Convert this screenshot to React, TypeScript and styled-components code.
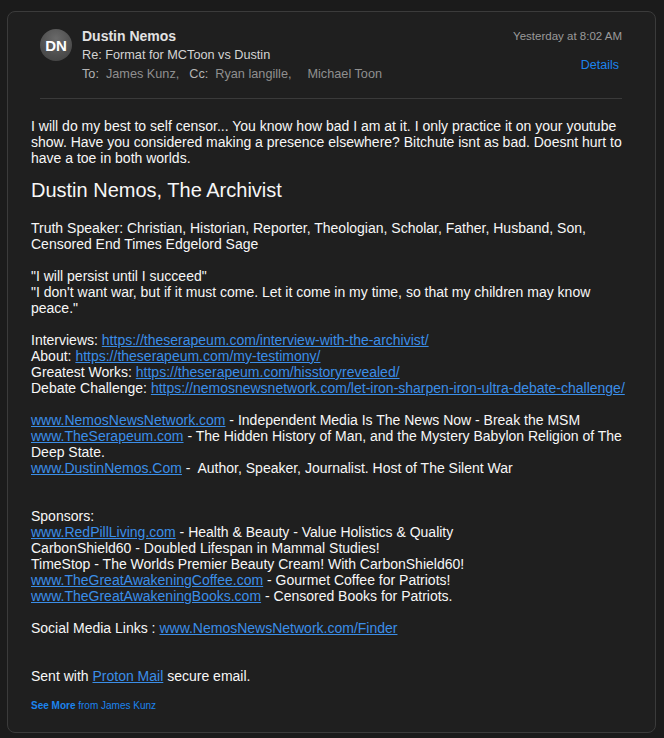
import React from "react";
import styled, { createGlobalStyle } from "styled-components";

const GlobalStyle = createGlobalStyle`
  html, body {
    margin: 0;
    padding: 0;
    background: #1b1b1b;
  }
  body {
    font-family: "Liberation Sans", Arial, Helvetica, sans-serif;
  }
`;

const Page = styled.div`
  padding: 11px 8px 6px 7px;
`;

const Card = styled.div`
  background: #1f1f1f;
  border: 1px solid #3b3b3b;
  border-radius: 8px;
  padding-bottom: 20px;
`;

const Header = styled.div`
  display: flex;
  align-items: flex-start;
  padding: 15px 33px 0 32px;
`;

const Avatar = styled.div`
  width: 32px;
  height: 32px;
  margin-top: 2px;
  border-radius: 50%;
  background: radial-gradient(circle at 50% 30%, #6a6a6a 0%, #4e4e4e 60%, #3f3f3f 100%);
  color: #ffffff;
  font-size: 15px;
  font-weight: bold;
  display: flex;
  align-items: center;
  justify-content: center;
  flex-shrink: 0;
`;

const Info = styled.div`
  flex: 1;
  margin-left: 10px;
  display: flex;
  flex-direction: column;
`;

const Name = styled.div`
  font-size: 14px;
  font-weight: bold;
  line-height: 19px;
  color: #e2e2e2;
`;

const Subject = styled.div`
  font-size: 12.7px;
  line-height: 19px;
  color: #d4d4d4;
`;

const Recipients = styled.div`
  display: flex;
  font-size: 12.7px;
  line-height: 19px;
`;

const Label = styled.span<{ $gap?: number }>`
  color: #b4b4b4;
  margin-left: ${(p) => p.$gap ?? 0}px;
  margin-right: 7px;
`;

const Person = styled.span<{ $gap?: number }>`
  color: #8f8f8f;
  margin-left: ${(p) => p.$gap ?? 0}px;
`;

const Side = styled.div`
  display: flex;
  flex-direction: column;
  align-items: flex-end;
`;

const DateText = styled.div`
  font-size: 11.5px;
  line-height: 19px;
  color: #9a9a9a;
`;

const DetailsLink = styled.a`
  margin-top: 10px;
  margin-right: 3px;
  font-size: 12.5px;
  line-height: 19px;
  color: #1c84ee;
  text-decoration: none;
`;

const Divider = styled.div`
  height: 1px;
  background: #3a3a3a;
  margin: 14px 33px 0 32px;
`;

const Body = styled.div`
  padding: 19px 24px 0 23px;
  font-size: 14px;
  line-height: 16px;
  color: #f7f7f7;
`;

const Heading = styled.div`
  font-size: 20px;
  line-height: 23px;
  margin: 13px 0 18px;
`;

const Blank = styled.div<{ $lines?: number }>`
  height: ${(p) => (p.$lines ?? 1) * 16}px;
`;

const Link = styled.a`
  color: #3b8ee8;
  text-decoration: underline;
`;

const Footer = styled.div`
  margin-top: 16px;
  font-size: 10px;
  line-height: 12px;
  color: #1c84ee;
`;

const Bold = styled.span`
  font-weight: bold;
`;

const App: React.FC = () => {
  return (
    <>
      <GlobalStyle />
      <Page>
        <Card>
          <Header>
            <Avatar>DN</Avatar>
            <Info>
              <Name>Dustin Nemos</Name>
              <Subject>Re: Format for MCToon vs Dustin</Subject>
              <Recipients>
                <Label>To:</Label>
                <Person>James Kunz,</Person>
                <Label $gap={10}>Cc:</Label>
                <Person>Ryan langille,</Person>
                <Person $gap={16}>Michael Toon</Person>
              </Recipients>
            </Info>
            <Side>
              <DateText>Yesterday at 8:02 AM</DateText>
              <DetailsLink>Details</DetailsLink>
            </Side>
          </Header>
          <Divider />
          <Body>
            <div>
              I will do my best to self censor... You know how bad I am at it. I only practice it on
              your youtube show. Have you considered making a presence elsewhere? Bitchute isnt as
              bad. Doesnt hurt to have a toe in both worlds.
            </div>
            <Heading>Dustin Nemos, The Archivist</Heading>
            <div>
              Truth Speaker: Christian, Historian, Reporter, Theologian, Scholar, Father, Husband,
              Son, Censored End Times Edgelord Sage
            </div>
            <Blank />
            <div>"I will persist until I succeed"</div>
            <div>
              "I don't want war, but if it must come. Let it come in my time, so that my children may
              know peace."
            </div>
            <Blank />
            <div>
              Interviews: <Link>https://theserapeum.com/interview-with-the-archivist/</Link>
            </div>
            <div>
              About: <Link>https://theserapeum.com/my-testimony/</Link>
            </div>
            <div>
              Greatest Works: <Link>https://theserapeum.com/hisstoryrevealed/</Link>
            </div>
            <div>
              Debate Challenge:{" "}
              <Link>https://nemosnewsnetwork.com/let-iron-sharpen-iron-ultra-debate-challenge/</Link>
            </div>
            <Blank />
            <div>
              <Link>www.NemosNewsNetwork.com</Link> - Independent Media Is The News Now - Break the MSM
            </div>
            <div>
              <Link>www.TheSerapeum.com</Link> - The Hidden History of Man, and the Mystery Babylon
              Religion of The Deep State.
            </div>
            <div>
              <Link>www.DustinNemos.Com</Link> -&nbsp; Author, Speaker, Journalist. Host of The Silent
              War
            </div>
            <Blank $lines={2} />
            <div>Sponsors:</div>
            <div>
              <Link>www.RedPillLiving.com</Link> - Health &amp; Beauty - Value Holistics &amp; Quality
            </div>
            <div>CarbonShield60 - Doubled Lifespan in Mammal Studies!</div>
            <div>TimeStop - The Worlds Premier Beauty Cream! With CarbonShield60!</div>
            <div>
              <Link>www.TheGreatAwakeningCoffee.com</Link> - Gourmet Coffee for Patriots!
            </div>
            <div>
              <Link>www.TheGreatAwakeningBooks.com</Link> - Censored Books for Patriots.
            </div>
            <Blank />
            <div>
              Social Media Links : <Link>www.NemosNewsNetwork.com/Finder</Link>
            </div>
            <Blank $lines={2} />
            <div>
              Sent with <Link>Proton Mail</Link> secure email.
            </div>
            <Footer>
              <Bold>See More</Bold> from James Kunz
            </Footer>
          </Body>
        </Card>
      </Page>
    </>
  );
};

export default App;
